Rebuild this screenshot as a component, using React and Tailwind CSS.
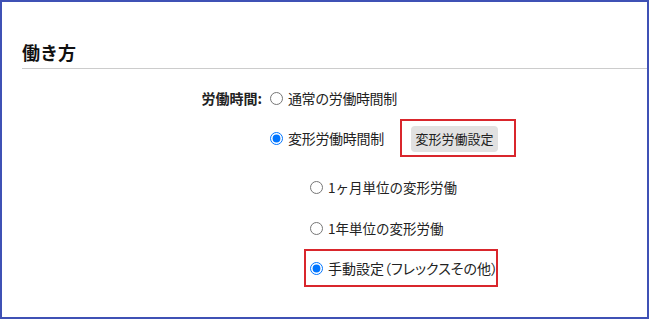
import { useState } from "react";

const FONT = {
  fontFamily: '"Noto Sans CJK JP", "Noto Sans", sans-serif',
};

function Radio({ checked, onChange, name }) {
  return (
    <input
      type="radio"
      name={name}
      checked={checked}
      onChange={onChange}
      className="m-0 h-[13px] w-[13px] shrink-0 accent-[#0075ff]"
    />
  );
}

export default function App() {
  const [mode, setMode] = useState("henkei");
  const [sub, setSub] = useState("manual");

  return (
    <div
      className="h-[319px] w-[649px] overflow-hidden border-2 border-[#3f51b5] bg-white text-[#222]"
      style={FONT}
    >
      <div className="ml-[20px] mt-[38px] border-b border-[#cccccc] pb-[4px]">
        <h2 className="text-[18px] font-bold leading-[24px] text-[#111]">働き方</h2>
      </div>

      <div className="mt-[19px] flex h-[20px] items-center text-[14px] leading-[20px]">
        <span className="w-[260px] text-right font-bold">労働時間:</span>
        <label className="ml-[8px] flex items-center gap-[5px]">
          <Radio name="mode" checked={mode === "normal"} onChange={() => setMode("normal")} />
          <span className="tracking-[-0.4px]">通常の労働時間制</span>
        </label>
      </div>

      <div className="mt-[11px] flex items-center pl-[268px] text-[14px] leading-[20px]">
        <label className="flex items-center gap-[5px]">
          <Radio name="mode" checked={mode === "henkei"} onChange={() => setMode("henkei")} />
          <span className="tracking-[-0.3px]">変形労働時間制</span>
        </label>
        <div className="ml-[16px] border-2 border-[#d9262c] pb-[3px] pl-[9px] pr-[16px] pt-[5px]">
          <button
            type="button"
            className="flex h-[26px] w-[87px] items-center justify-center rounded-[4px] bg-[#e1e1e1] text-[13px] text-[#222]"
          >
            変形労働設定
          </button>
        </div>
      </div>

      <div className="mt-[20px] flex h-[20px] items-center pl-[308px] text-[13.5px] leading-[20px]">
        <label className="flex items-center gap-[5px]">
          <Radio name="sub" checked={sub === "month"} onChange={() => setSub("month")} />
          <span>1ヶ月単位の変形労働</span>
        </label>
      </div>

      <div className="mt-[21px] flex h-[20px] items-center pl-[308px] text-[13.5px] leading-[20px]">
        <label className="flex items-center gap-[5px]">
          <Radio name="sub" checked={sub === "year"} onChange={() => setSub("year")} />
          <span>1年単位の変形労働</span>
        </label>
      </div>

      <div className="mt-[11px] flex pl-[302px]">
        <div className="flex h-[38px] w-[194px] items-center border-2 border-[#d9262c] pl-[4px] text-[14px] leading-[20px]">
          <label className="flex items-center gap-[5px] whitespace-nowrap">
            <Radio name="sub" checked={sub === "manual"} onChange={() => setSub("manual")} />
            <span className="[font-feature-settings:'palt']">手動設定（フレックスその他）</span>
          </label>
        </div>
      </div>
    </div>
  );
}
